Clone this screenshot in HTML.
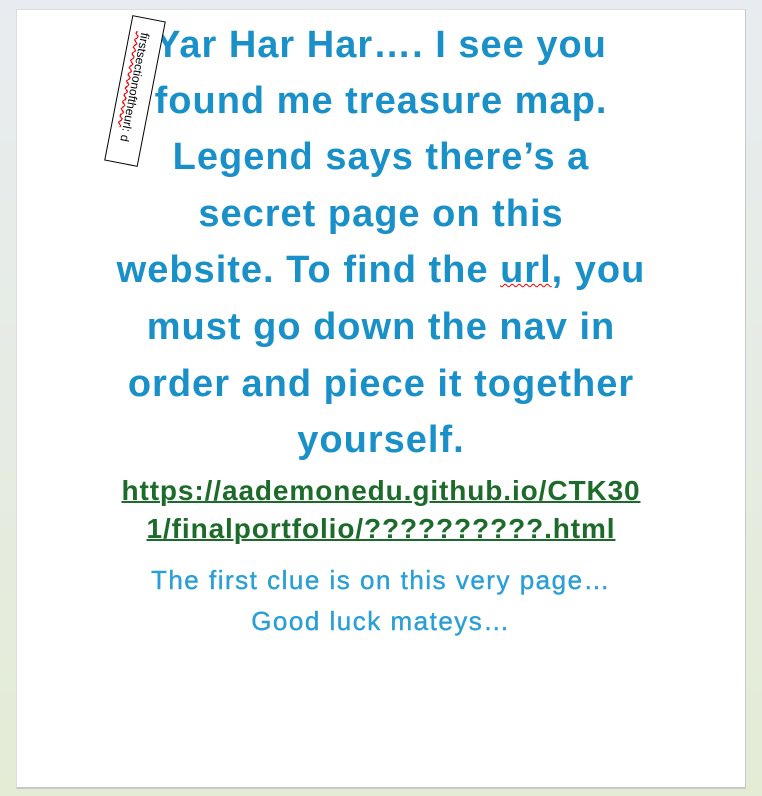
<!DOCTYPE html>
<html><head><meta charset="utf-8"><style>
html,body{margin:0;padding:0;width:762px;height:796px;overflow:hidden;background:linear-gradient(#e8ecf0,#e4ecd6);font-family:"Liberation Sans",sans-serif}
.page{position:absolute;left:16px;top:9px;width:730px;height:780px;background:#fff;border-right:1px solid #c8c8c8;border-bottom:2px solid #c8c8c8;border-left:1px solid #ddd;border-top:1px solid #ddd;box-sizing:border-box}
.l{position:absolute;left:0;width:762px;text-align:center;white-space:nowrap}
.h{font-size:38px;font-weight:bold;color:#1a90c8;height:40px;line-height:40px;letter-spacing:1px}
.k{font-size:28px;font-weight:bold;color:#1d6b2a;text-decoration:underline;text-decoration-thickness:2px;height:30px;line-height:30px;letter-spacing:0.9px}
.s{font-size:26px;color:#2a9fd6;height:30px;line-height:30px;letter-spacing:1.5px;-webkit-text-stroke:0.4px #2a9fd6}
.box{position:absolute;left:61px;top:74px;width:148px;height:34px;border:1px solid #000;transform:rotate(101deg);transform-origin:center;font-size:12px;line-height:34px;text-align:left;padding-left:14px;box-sizing:border-box;background:#fff}
.sq{text-decoration:underline wavy #e00;}
</style></head><body>
<div class="page"></div>
<div class="l h" style="top:25px">Yar Har Har…. I see you</div>
<div class="l h" style="top:81px">found me treasure map.</div>
<div class="l h" style="top:137px">Legend says there’s a</div>
<div class="l h" style="top:194px">secret page on this</div>
<div class="l h" style="top:250px">website. To find the <span class="sq" style="text-decoration-thickness:1px">url</span>, you</div>
<div class="l h" style="top:307px">must go down the nav in</div>
<div class="l h" style="top:364px">order and piece it together</div>
<div class="l h" style="top:420px">yourself.</div>
<div class="l k" style="top:476px">https://aademonedu.github.io/CTK30</div>
<div class="l k" style="top:514px">1/finalportfolio/??????????.html</div>
<div class="l s" style="top:565px">The first clue is on this very page…</div>
<div class="l s" style="top:606px">Good luck mateys…</div>
<div class="box"><span class="sq">firstsectionoftheurl</span>: d</div>
</body></html>
